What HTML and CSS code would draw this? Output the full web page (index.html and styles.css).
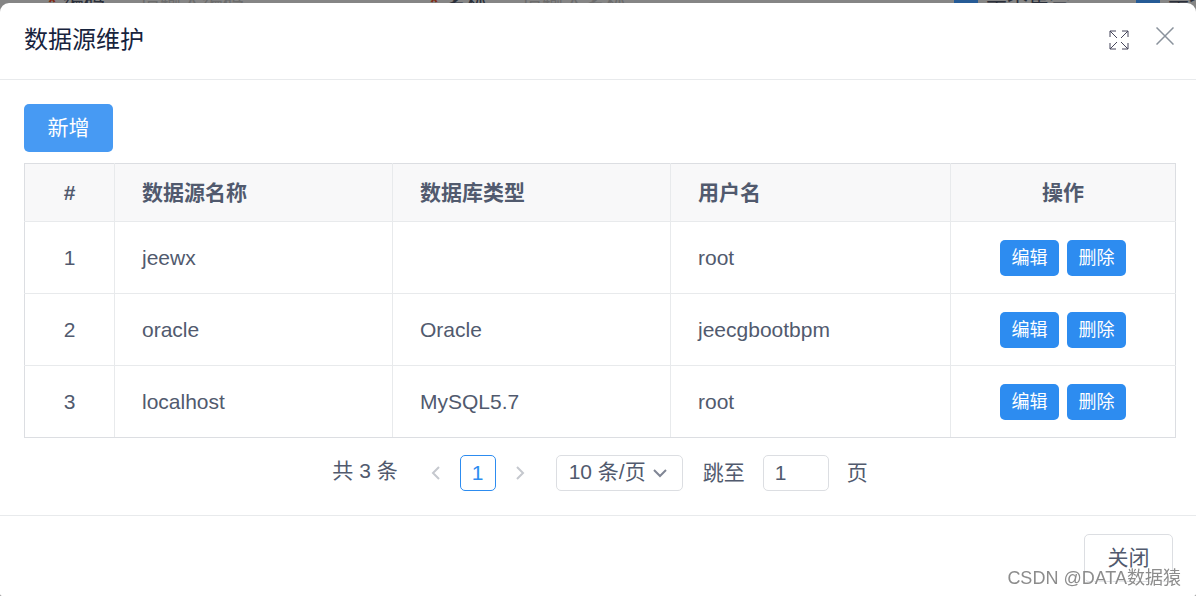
FILE: index.html
```html
<!DOCTYPE html>
<html lang="zh-CN">
<head>
<meta charset="utf-8">
<title>数据源维护</title>
<link rel="stylesheet" href="styles.css">
</head>
<body>
<div class="backdrop" aria-hidden="true">
  <div class="form-row">
    <span class="field"><b class="required">*</b><span class="field-name">编码</span><span class="hint">请输入编码</span></span>
    <span class="field"><b class="required">*</b><span class="field-name">名称</span><span class="hint">请输入名称</span></span>
    <span class="option"><i class="check"></i>是否集合</span>
    <span class="option"><i class="check"></i>是否分页</span>
  </div>
</div>
<main class="modal" role="dialog" aria-labelledby="title">
  <header class="modal-header">
    <h1 id="title">数据源维护</h1>
    <div class="tools">
      <button class="tool expand" aria-label="全屏">
        <svg width="20" height="20" viewBox="0 0 20 20"><path d="M1 7V1h6M1 1l7 7M13 1h6v6M19 1l-7 7M1 13v6h6M1 19l7-7M19 13v6h-6M19 19l-7-7"/></svg>
      </button>
      <button class="tool close" aria-label="关闭窗口">
        <svg width="18" height="18" viewBox="0 0 18 18"><path d="M.5.5l17 17M17.500.5l-17 17"/></svg>
      </button>
    </div>
  </header>
  <section class="modal-body">
    <button class="btn btn-add">新增</button>
    <table class="grid">
      <colgroup><col class="c-index"><col class="c-name"><col class="c-type"><col class="c-user"><col class="c-action"></colgroup>
      <thead>
        <tr><th class="center">#</th><th>数据源名称</th><th>数据库类型</th><th>用户名</th><th class="center">操作</th></tr>
      </thead>
      <tbody>
        <tr><td class="center">1</td><td>jeewx</td><td></td><td>root</td><td><div class="actions"><button class="btn btn-small">编辑</button><button class="btn btn-small">删除</button></div></td></tr>
        <tr><td class="center">2</td><td>oracle</td><td>Oracle</td><td>jeecgbootbpm</td><td><div class="actions"><button class="btn btn-small">编辑</button><button class="btn btn-small">删除</button></div></td></tr>
        <tr><td class="center">3</td><td>localhost</td><td>MySQL5.7</td><td>root</td><td><div class="actions"><button class="btn btn-small">编辑</button><button class="btn btn-small">删除</button></div></td></tr>
      </tbody>
    </table>
    <nav class="pager" aria-label="分页">
      <span class="total">共 3 条</span>
      <div class="pages">
        <button class="arrow" aria-label="上一页" disabled><svg width="10" height="14" viewBox="0 0 10 14"><path d="M8 1L2 7l6 6"/></svg></button>
        <button class="page" aria-current="page">1</button>
        <button class="arrow" aria-label="下一页" disabled><svg width="10" height="14" viewBox="0 0 10 14"><path d="M2 1l6 6-6 6"/></svg></button>
      </div>
      <div class="size">
        <select aria-label="每页条数"><option>10 条/页</option><option>20 条/页</option></select>
        <svg class="caret" width="14" height="9" viewBox="0 0 14 9"><path d="M1 1l6 6 6-6"/></svg>
      </div>
      <div class="jump">
        <label for="jump">跳至</label>
        <input id="jump" type="text" value="1">
        <span>页</span>
      </div>
    </nav>
  </section>
  <footer class="modal-footer">
    <button class="btn btn-plain">关闭</button>
  </footer>
</main>
<div class="watermark">CSDN @DATA数据猿</div>
</body>
</html>
```
FILE: styles.css
```css
* { box-sizing: border-box; }
body {
  margin: 0;
  min-height: 100vh;
  display: flex;
  flex-direction: column;
  background: #858585;
  color: #515a6e;
  font: 21px/32px "Liberation Sans", "Noto Sans CJK SC", sans-serif;
}
button, input, select { font: inherit; color: inherit; margin: 0; padding: 0; }
button { cursor: pointer; border: 0; background: none; }
svg { display: block; fill: none; stroke: currentColor; }

.backdrop { height: 3px; overflow: hidden; display: flex; align-items: center; }
.form-row {
  width: 100%;
  display: grid;
  grid-template-columns: 382px 1fr 182px 60px;
  padding-left: 48px;
  line-height: 24px;
  white-space: nowrap;
  color: #2b2f3a;
}
.field { display: flex; }
.required { width: 15px; color: #7f2c17; }
.field-name { width: 76px; }
.hint { color: #6c6c6c; }
.option { display: flex; gap: 8px; }
.check { flex: none; width: 24px; height: 24px; background: #265b96; }

.modal {
  flex: 1;
  display: flex;
  flex-direction: column;
  background: #fff;
  border-radius: 9px 9px 2px 2px;
}
.modal-header {
  display: flex;
  justify-content: space-between;
  align-items: center;
  height: 77px;
  padding: 0 22px 2px 24px;
  border-bottom: 1px solid #e8eaec;
}
h1 { margin: 0; font-size: 24px; font-weight: 400; color: #17233d; }
.tools { display: flex; align-items: flex-start; gap: 27px; padding-bottom: 3px; }
.tool { display: block; }
.expand { padding-top: 3px; color: #45455a; }
.close { color: #8a929c; }
.close svg { stroke-width: 1.5; }

.modal-body { padding: 24px 20px 24px 24px; }
.btn { border-radius: 5px; color: #fff; background: #2d8cf0; }
.btn-add { display: block; min-width: 89px; padding: 8px 22px; background: #479af3; }
.grid {
  width: 100%;
  margin: 11px 0 17px;
  table-layout: fixed;
  border-collapse: collapse;
  border: 1px solid #dcdee2;
}
.c-index { width: 90px; }
.c-user { width: 280px; }
.c-action { width: 225px; }
th, td { padding: 0 27px; border: 1px solid #e8eaec; text-align: left; }
th { height: 58px; background: #f8f8f9; font-weight: 700; }
td { height: 72px; }
thead th { border-top-color: #dcdee2; }
tbody tr:last-child td { border-bottom-color: #dcdee2; }
tr > :first-child { border-left-color: #dcdee2; }
tr > :last-child { border-right-color: #dcdee2; }
.center { text-align: center; }
.actions { display: flex; justify-content: center; gap: 8px; }
.btn-small { min-width: 59px; padding: 2px 11px; font-size: 18px; white-space: nowrap; }

.pager { display: flex; justify-content: center; align-items: center; }
.total { margin-right: 24px; padding-bottom: 4px; }
.pages { display: flex; gap: 10px; }
.arrow { width: 28px; display: flex; justify-content: center; align-items: center; color: #c5c8ce; }
.arrow svg { stroke-width: 2; }
.page { width: 36px; height: 36px; border: 1px solid #2d8cf0; border-radius: 5px; color: #2d8cf0; }
.size { position: relative; margin: 0 20px 0 22px; }
select, input { height: 36px; border: 1px solid #dcdee2; border-radius: 5px; background: #fff; }
select { display: block; width: 127px; padding: 0 12px 2px; appearance: none; }
.caret { position: absolute; right: 16px; top: 14px; stroke-width: 2; color: #808695; pointer-events: none; }
.jump { display: flex; align-items: center; gap: 18px; }
input { width: 66px; padding: 0 11px; }

.modal-footer {
  display: flex;
  justify-content: flex-end;
  padding: 18px 23px 14px;
  border-top: 1px solid #e8eaec;
}
.btn-plain { min-width: 89px; height: 48px; border: 1px solid #dcdee2; background: #fff; color: #515a6e; }
.watermark {
  position: fixed;
  right: 15px;
  bottom: 5px;
  font-size: 18px;
  line-height: 26px;
  color: #8c8c8c;
  text-shadow: 1px 1px 1px #fff;
  pointer-events: none;
}
```
